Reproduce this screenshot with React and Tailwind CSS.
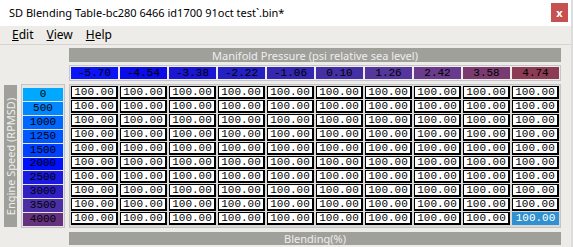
import React from 'react';

const cols = [
  { v: '-5.70', c: 'bg-[#0a14f5]' },
  { v: '-4.54', c: 'bg-[#0c0ce6]' },
  { v: '-3.38', c: 'bg-[#1a16d4]' },
  { v: '-2.22', c: 'bg-[#2520c2]' },
  { v: '-1.06', c: 'bg-[#3428b0]' },
  { v: '0.10', c: 'bg-[#4430a4]' },
  { v: '1.26', c: 'bg-[#55369c]' },
  { v: '2.42', c: 'bg-[#6a3a8c]' },
  { v: '3.58', c: 'bg-[#7a3c70]' },
  { v: '4.74', c: 'bg-[#8c3c54]' },
];

const rows = [
  { v: '0', c: 'bg-[#00a8ff]' },
  { v: '500', c: 'bg-[#0088ff]' },
  { v: '1000', c: 'bg-[#0068ff]' },
  { v: '1250', c: 'bg-[#0058ff]' },
  { v: '1500', c: 'bg-[#0040ff]' },
  { v: '2000', c: 'bg-[#0010fa]' },
  { v: '2500', c: 'bg-[#1a1ae0]' },
  { v: '3000', c: 'bg-[#3020c4]' },
  { v: '3500', c: 'bg-[#4a30a4]' },
  { v: '4000', c: 'bg-[#663280]' },
];

const mono = { fontFamily: '"Liberation Mono", "DejaVu Sans Mono", monospace' };

function Cell({ selected }) {
  return (
    <div
      className={
        'h-[13px] w-[47px] flex items-center justify-center text-[11px] leading-none ' +
        (selected
          ? 'bg-[#3090d0] text-white border border-[#3090d0]'
          : 'bg-white text-black border border-black border-r-2 border-b-2')
      }
      style={mono}
    >
      100.00
    </div>
  );
}

export default function App() {
  return (
    <div className="w-[573px] h-[247px] bg-[#dcdcdc] overflow-hidden" style={{ fontFamily: '"Noto Sans", "Open Sans", sans-serif' }}>
      <div className="w-[571px] h-[247px] bg-[#eeece8] flex flex-col">
        <div className="h-[26px] bg-white flex items-center justify-between pl-[9px] pr-[3px]">
          <span className="text-[11px] text-black">SD Blending Table-bc280 6466 id1700 91oct test`.bin*</span>
          <div className="w-[17px] h-[19px] bg-[#c75050] text-white text-[11px] font-bold flex items-center justify-center leading-none mt-[-1px]">x</div>
        </div>
        <div className="h-[19px] flex items-center gap-[13px] pl-[12px] text-[12px] text-black border-b border-[#d6d4d0]">
          <span><span className="underline">E</span>dit</span>
          <span><span className="underline">V</span>iew</span>
          <span><span className="underline">H</span>elp</span>
        </div>
        <div className="grid grid-cols-[13px_44px_492px] grid-rows-[14px_16px_144px_14px] gap-x-[4px] gap-y-[3px] pl-[4px] pt-[3px]">
          <div className="col-start-3 bg-[#a0a09b] text-[#eeeeee] text-[11px] flex items-center justify-center leading-none">
            Manifold Pressure (psi relative sea level)
          </div>
          <div className="col-start-3 border border-[#c4c4c4] flex items-center gap-[2px] px-[1px]">
            {cols.map((c) => (
              <div key={c.v} className={'h-[12px] w-[47px] flex items-center justify-center text-[11px] leading-none text-black ' + c.c} style={mono}>
                {c.v}
              </div>
            ))}
          </div>
          <div className="col-start-1 bg-[#a0a09b] flex items-center justify-center overflow-hidden mt-[1px] mb-[1px]">
            <span className="-rotate-90 whitespace-nowrap text-[11px] text-[#eeeeee] leading-none">Engine Speed (RPMSD)</span>
          </div>
          <div className="col-start-2 border border-[#c4c4c4] bg-[#e4e4e4] flex flex-col gap-[1px] p-[1px] pt-[3px]">
            {rows.map((r) => (
              <div key={r.v} className={'h-[13px] flex items-center justify-center text-[11px] leading-none text-black ' + r.c} style={mono}>
                {r.v}
              </div>
            ))}
          </div>
          <div className="col-start-3 border border-[#c4c4c4] bg-[#d8d8d8] flex flex-col gap-[1px] p-[1px]">
            {rows.map((r, ri) => (
              <div key={r.v} className="flex gap-[2px]">
                {cols.map((c, ci) => (
                  <Cell key={c.v} selected={ri === 9 && ci === 9} />
                ))}
              </div>
            ))}
          </div>
          <div className="col-start-3 bg-[#a0a09b] text-[#eeeeee] text-[11px] flex items-center justify-center leading-none mt-[1px]">
            Blending(%)
          </div>
        </div>
      </div>
    </div>
  );
}
